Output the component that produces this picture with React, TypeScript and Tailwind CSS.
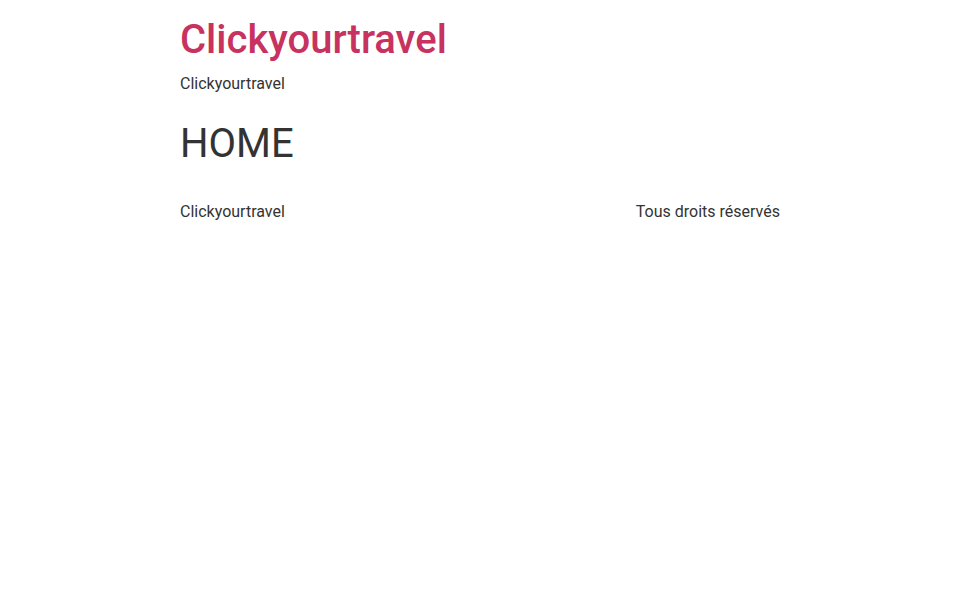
export default function App() {
  return (
    <div className="min-h-[600px] bg-white font-['Roboto',sans-serif] text-[#333]">
      <div className="mx-auto w-[600px] pt-[14px]">
        <header>
          <h1 className="text-[40px] font-medium leading-[52px] text-[#c7325f]">Clickyourtravel</h1>
          <p className="mt-[6px] text-base leading-6">Clickyourtravel</p>
        </header>
        <main className="mt-[24px]">
          <h2 className="text-[40px] leading-[48px]">HOME</h2>
        </main>
        <footer className="mt-[32px] flex justify-between text-base leading-6">
          <span>Clickyourtravel</span>
          <span>Tous droits réservés</span>
        </footer>
      </div>
    </div>
  );
}
